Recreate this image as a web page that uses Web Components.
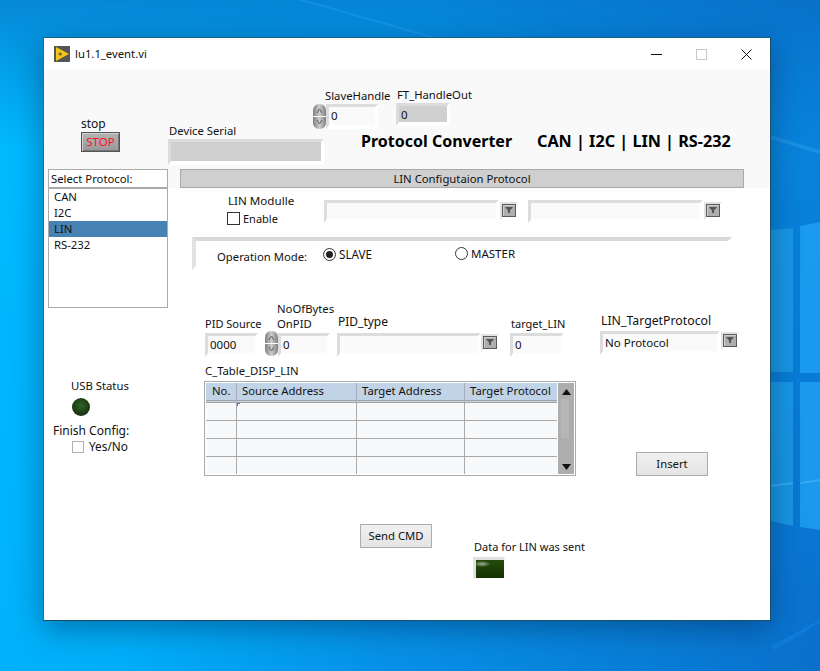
<!DOCTYPE html>
<html>
<head>
<meta charset="utf-8">
<title>lu1.1_event.vi</title>
<style>
html, body { margin: 0; height: 100%; overflow: hidden; }
body { font: 11.3px/16px "Noto Sans", "Open Sans", sans-serif; color: #111; }
</style>
</head>
<body>
<win-desktop>
  <vi-window title-text="lu1.1_event.vi">
    <lv-text at="81,116" fs="12">stop</lv-text>
    <lv-stop at="81,132,39,20"></lv-stop>
    <lv-text at="169,123">Device Serial</lv-text>
    <lv-field at="168,139,156,26" tone="dark"></lv-field>

    <lv-text at="325,88">SlaveHandle</lv-text>
    <lv-spin at="313,104,13,25"></lv-spin>
    <lv-field at="326,104,52,25" value="0"></lv-field>
    <lv-text at="397,87">FT_HandleOut</lv-text>
    <lv-field at="396,103,54,23" tone="dark" value="0"></lv-field>

    <lv-text at="361,131" size="16">Protocol Converter</lv-text>
    <lv-text at="537,131" size="16.2">CAN | I2C | LIN | RS-232</lv-text>

    <lv-list at="48,169,120,139" heading="Select Protocol:" selected="2">
      <span>CAN</span><span>I2C</span><span>LIN</span><span>RS-232</span>
    </lv-list>
    <lv-bar at="180,169,564,19">LIN Configutaion Protocol</lv-bar>

    <lv-text at="228,193" fs="11.6">LIN Modulle</lv-text>
    <lv-check at="227,212,13,13"></lv-check>
    <lv-text at="243,211" fs="11">Enable</lv-text>
    <lv-field at="324,200,175,23"></lv-field>
    <lv-drop at="500,202,18,18"></lv-drop>
    <lv-field at="528,200,175,23"></lv-field>
    <lv-drop at="704,202,18,18"></lv-drop>

    <lv-frame at="192,237,540,33"></lv-frame>
    <lv-text at="217,249">Operation Mode:</lv-text>
    <lv-radio at="323,248,13,13" on></lv-radio>
    <lv-text at="339,247" fs="11.7">SLAVE</lv-text>
    <lv-radio at="455,247,13,13"></lv-radio>
    <lv-text at="471,246" fs="11.5">MASTER</lv-text>

    <lv-text at="205,316" fs="11">PID Source</lv-text>
    <lv-field at="205,333,53,24" value="0000"></lv-field>
    <lv-spin at="265,331,13,25"></lv-spin>
    <lv-text at="277,301">NoOfBytes</lv-text>
    <lv-text at="277,316">OnPID</lv-text>
    <lv-field at="278,333,52,24" value="0"></lv-field>
    <lv-text at="338,314" fs="12">PID_type</lv-text>
    <lv-field at="337,333,144,24"></lv-field>
    <lv-drop at="481,334,18,18"></lv-drop>
    <lv-text at="511,316" fs="11">target_LIN</lv-text>
    <lv-field at="510,333,54,24" value="0"></lv-field>
    <lv-text at="601,313" fs="12.3">LIN_TargetProtocol</lv-text>
    <lv-field at="600,331,120,24" value="No Protocol"></lv-field>
    <lv-drop at="721,332,18,18"></lv-drop>

    <lv-text at="205,363">C_Table_DISP_LIN</lv-text>
    <lv-table at="204,381,372,95"></lv-table>

    <lv-text at="71,378">USB Status</lv-text>
    <lv-led at="72,398,18,18"></lv-led>
    <lv-text at="53,423" fs="12">Finish Config:</lv-text>
    <lv-check at="72,441,12,12" pale></lv-check>
    <lv-text at="89,439" fs="11.8">Yes/No</lv-text>

    <lv-button at="636,452,72,24">Insert</lv-button>
    <lv-button at="360,524,72,24">Send CMD</lv-button>
    <lv-text at="474,539" fs="11">Data for LIN was sent</lv-text>
    <lv-led at="473,557,32,22" square></lv-led>
  </vi-window>
</win-desktop>

<script>
"use strict";

// Front panel origin inside the page, widgets are given in page coordinates
const PANEL_X = 44;
const PANEL_Y = 70;

class PanelWidget extends HTMLElement {
  constructor() {
    super();
    this.attachShadow({ mode: "open" });
  }

  connectedCallback() {
    const [x, y, w, h] = (this.getAttribute("at") || "0,0").split(",").map(Number);
    this.style.left = (x - PANEL_X) + "px";
    this.style.top = (y - PANEL_Y) + "px";
    if (w) this.style.width = w + "px";
    if (h) this.style.height = h + "px";
    this.shadowRoot.innerHTML = `<style>:host{position:absolute;display:block;box-sizing:border-box}${this.css()}</style>${this.markup()}`;
  }

  css() { return ""; }
  markup() { return "<slot></slot>"; }
}

class LvText extends PanelWidget {
  css() {
    const size = this.getAttribute("size");
    const fs = this.getAttribute("fs");
    return `:host{white-space:nowrap;color:#111;line-height:15px;
      ${fs ? `font-size:${fs}px;` : ""}
      ${size ? `font-size:${size}px;font-weight:700;line-height:20px;color:#000;` : ""}}`;
  }
}

class LvField extends PanelWidget {
  css() {
    const dark = this.getAttribute("tone") === "dark";
    return `
      :host{border-style:solid;border-width:3px 3px 4px 3px;border-color:#dcdcdc #fff #fff #dcdcdc;
        background:${dark ? "#cfcfcf" : "#fafafa"};background-clip:padding-box;
        font-size:11.5px;line-height:15px;padding:1px 0 0 2px;overflow:hidden;white-space:nowrap;color:#111}`;
  }
  markup() { return this.getAttribute("value") || ""; }
}

class LvFrame extends PanelWidget {
  css() {
    return `:host{border-style:solid;border-width:4px;border-color:#d8d8d8 transparent transparent #e2e2e2}`;
  }
  markup() { return ""; }
}

class LvBar extends PanelWidget {
  css() {
    return `:host{background:#cfcfcf;border:1px solid #a9a9a9;display:flex;align-items:center;justify-content:center;color:#111}`;
  }
}

class LvStop extends PanelWidget {
  css() {
    return `:host{border:1px solid #555;background:linear-gradient(#b4b4b4,#989898);font-size:11.5px;
      box-shadow:inset 1px 1px 0 #cfcfcf,inset -1px -1px 0 #777;color:#ff1028;display:flex;align-items:center;justify-content:center}`;
  }
  markup() { return "STOP"; }
}

class LvSpin extends PanelWidget {
  css() { return `svg{display:block}`; }
  markup() {
    return `<svg width="13" height="25" viewBox="0 0 13 25">
      <defs><linearGradient id="g" x1="0" x2="1" y1="0" y2="0"><stop offset="0" stop-color="#7f7f7f"/><stop offset=".5" stop-color="#cdcdcd"/><stop offset="1" stop-color="#7f7f7f"/></linearGradient></defs>
      <path d="M0 12V7Q0 0 6.5 0T13 7V12Z" fill="url(#g)"/>
      <path d="M0 13V18Q0 25 6.5 25T13 18V13Z" fill="url(#g)"/>
      <path d="M4 9L6.5 5L9 9" fill="none" stroke="#5c5c5c"/>
      <path d="M4 16L6.5 20L9 16" fill="none" stroke="#5c5c5c"/>
    </svg>`;
  }
}

class LvDrop extends PanelWidget {
  css() {
    return `:host{border-style:solid;border-width:2px;border-color:#e2e2e2 #fff #fff #e2e2e2}
      div{box-sizing:border-box;width:14px;height:13px;border:1px solid #5a5a5a;background:#aeaeae;box-shadow:inset 1px 1px 0 #cfcfcf;position:relative}
      svg{position:absolute;left:2px;top:2px}`;
  }
  markup() {
    return `<div><svg width="8" height="7" viewBox="0 0 8 7"><path d="M0 0H8L5 3.5V6H3V3.5Z" fill="#555"/></svg></div>`;
  }
}

class LvCheck extends PanelWidget {
  css() {
    const color = this.hasAttribute("pale") ? "#b0b0b0" : "#333";
    return `:host{border:1px solid ${color};background:#fff}`;
  }
  markup() { return ""; }
}

class LvRadio extends PanelWidget {
  css() {
    return `:host{border:1px solid #333;border-radius:50%;background:#fff;display:flex;align-items:center;justify-content:center}
      i{width:7px;height:7px;border-radius:50%;background:#222}`;
  }
  markup() { return this.hasAttribute("on") ? "<i></i>" : ""; }
}

class LvLed extends PanelWidget {
  css() {
    if (this.hasAttribute("square")) {
      return `:host{border-style:solid;border-width:3px 1px 1px 3px;border-color:#e2e2e2 #fff #fff #e2e2e2;
        background:radial-gradient(ellipse 9px 3px at 6px 4px,#9fb096,transparent),linear-gradient(#254a0c,#143204)}`;
    }
    return `:host{border-radius:50%;background:radial-gradient(circle at 50% 42%,#33602a,#1f4614 46%,#182a14 74%,#aab0aa 100%)}`;
  }
  markup() { return ""; }
}

class LvButton extends PanelWidget {
  css() {
    return `:host{border:1px solid #acacac;background:linear-gradient(#f0f0f0,#e4e4e4);display:flex;align-items:center;justify-content:center;color:#111}`;
  }
}

class LvList extends PanelWidget {
  css() {
    return `
      :host{display:flex;flex-direction:column}
      .head{height:19px;box-sizing:border-box;border:1px solid #aaa;background:#fff;padding-left:2px;line-height:17px}
      .body{flex:1;border:1px solid #aaa;background:#fff;display:flex;flex-direction:column}
      ::slotted(span){height:16px;padding-left:5px;line-height:16px;color:#111}
      ::slotted(span.sel){background:#4682b4}`;
  }
  markup() { return `<div class="head">${this.getAttribute("heading")}</div><div class="body"><slot></slot></div>`; }
  connectedCallback() {
    super.connectedCallback();
    const sel = Number(this.getAttribute("selected"));
    this.children[sel].classList.add("sel");
  }
}

class LvTable extends PanelWidget {
  css() {
    return `
      :host{border:1px solid #aaa;padding:1px;display:flex;background:#fff}
      .grid{flex:1;display:grid;grid-template-columns:31px 120px 108px 92px;grid-template-rows:20px 18px 18px 18px 17px;background:#f8f9fb}
      .h{background:#c1d3e6;border-right:1px solid #aab;border-bottom:3px double #a4a4a4;box-sizing:border-box;padding-left:5px;line-height:16px;color:#111;white-space:nowrap}
      .h.no{padding-left:6px}
      .c{border-right:1px solid #aaa;border-bottom:1px solid #aaa;box-sizing:border-box}
      .last{border-bottom:0}
      .grid>:nth-child(4n){border-right:0}
      .mark{position:relative}
      .mark::after{content:"";position:absolute;left:0;top:0;width:3px;height:3px;border:solid #3a78d0;border-width:1px 0 0 1px;box-sizing:border-box}
      .scroll{width:16px;margin-left:1px;background:#adadad;position:relative;display:flex;flex-direction:column;align-items:center;justify-content:space-between;padding:6px 0 4px;box-sizing:border-box}
      .thumb{position:absolute;left:3px;top:16px;width:8px;height:39px;background:#b6b6b6}
      svg{display:block;position:relative}`;
  }
  markup() {
    const heads = ["No.", "Source Address", "Target Address", "Target Protocol"];
    let rows = "";
    for (let r = 0; r < 4; r++) {
      for (let c = 0; c < 4; c++) {
        const cls = ["c"];
        if (r === 0 && c === 1) cls.push("mark");
        if (r === 3) cls.push("last");
        rows += `<div class="${cls.join(" ")}"></div>`;
      }
    }
    return `<div class="grid">
        ${heads.map((h, i) => `<div class="h${i ? "" : " no"}">${h}</div>`).join("")}
        ${rows}
      </div>
      <div class="scroll"><div class="thumb"></div>
        <svg width="9" height="6"><path d="M4.5 0L9 6H0Z" fill="#111"/></svg>
        <svg width="9" height="6"><path d="M0 0H9L4.5 6Z" fill="#111"/></svg>
      </div>`;
  }
}

class ViWindow extends HTMLElement {
  constructor() {
    super();
    this.attachShadow({ mode: "open" });
  }

  connectedCallback() {
    this.shadowRoot.innerHTML = `
<style>
:host {
  position: absolute; left: 43px; top: 37px; width: 728px; height: 584px;
  box-sizing: border-box; display: flex; flex-direction: column;
  background: #fff; border: 1px solid #17506f; border-left-color: #1b6ea0; border-top-color: #17608c;
  box-shadow: 0 8px 28px rgba(0, 30, 70, .42);
}
.title { height: 32px; display: flex; align-items: center; padding-left: 10px; gap: 5px; flex: none; color: #111; }
.title span { flex: 1; }
.title svg { display: block; }
.ctls { display: flex; margin-right: 1px; }
.ctl { width: 45px; height: 32px; display: flex; align-items: center; justify-content: center; }
.canvas { position: relative; flex: 1; }
.band { height: 118px; background: #f9f9f9; }
</style>
<div class="title">
  <svg width="16" height="16" viewBox="0 0 16 16"><rect width="16" height="16" fill="#555"/><path d="M2 1L15 8L2 15Z" fill="#f5c518"/><path d="M4.5 8H8M6.2 6.4V9.6" stroke="#444" stroke-width="1"/></svg>
  <span>${this.getAttribute("title-text")}</span>
  <div class="ctls">
    <div class="ctl"><svg width="11" height="1"><rect width="11" height="1" fill="#111"/></svg></div>
    <div class="ctl"><svg width="11" height="11"><rect x=".5" y=".5" width="10" height="10" fill="none" stroke="#c8c8c8"/></svg></div>
    <div class="ctl"><svg width="11" height="11"><path d="M.5 .5L10.5 10.5M10.5 .5L.5 10.5" stroke="#111" fill="none"/></svg></div>
  </div>
</div>
<div class="canvas">
  <div class="band"></div>
  <slot></slot>
</div>`;
  }
}

class WinDesktop extends HTMLElement {
  constructor() {
    super();
    this.attachShadow({ mode: "open" });
    this.shadowRoot.innerHTML = `
<style>
:host { display: block; position: relative; width: 820px; height: 671px; overflow: hidden;
  background: linear-gradient(115deg, #00bcff 0%, #00aef8 38%, #0690e6 62%, #0a70cc 100%); }
svg { position: absolute; left: 0; top: 0; }
</style>
<svg width="820" height="671" viewBox="0 0 820 671">
  <defs>
    <linearGradient id="top" x1="0" y1="0" x2="0" y2="1"><stop offset="0" stop-color="#0a5fb8" stop-opacity=".55"/><stop offset="1" stop-color="#0a5fb8" stop-opacity="0"/></linearGradient>
  </defs>
  <rect width="820" height="150" fill="url(#top)"/>
  <path d="M298 0H305L436 37H428Z" fill="#2aa0f4" opacity=".4"/>
  <path d="M771 135L820 150V154L771 139Z" fill="#3aa8f0" opacity=".35"/>
  <path d="M771 230L793 228V372H771Z" fill="#1fa2ea" opacity=".7"/>
  <path d="M800 226L820 222V373H800Z" fill="#20a4f6" opacity=".75"/>
  <path d="M771 382H793V526L771 521Z" fill="#1fa2ea" opacity=".7"/>
  <path d="M800 382H820V530L800 527Z" fill="#20a4f6" opacity=".75"/>
  <path d="M771 485L793 482V484L771 487ZM800 482L820 479V481L800 484Z" fill="#5cc4f8" opacity=".4"/>
  <path d="M771 646L820 620V622L775 650Z" fill="#1e90f0" opacity=".35"/>
</svg>
<slot></slot>`;
  }
}

customElements.define("lv-text", LvText);
customElements.define("lv-field", LvField);
customElements.define("lv-frame", LvFrame);
customElements.define("lv-bar", LvBar);
customElements.define("lv-stop", LvStop);
customElements.define("lv-spin", LvSpin);
customElements.define("lv-drop", LvDrop);
customElements.define("lv-check", LvCheck);
customElements.define("lv-radio", LvRadio);
customElements.define("lv-led", LvLed);
customElements.define("lv-button", LvButton);
customElements.define("lv-list", LvList);
customElements.define("lv-table", LvTable);
customElements.define("vi-window", ViWindow);
customElements.define("win-desktop", WinDesktop);
</script>
</body>
</html>
